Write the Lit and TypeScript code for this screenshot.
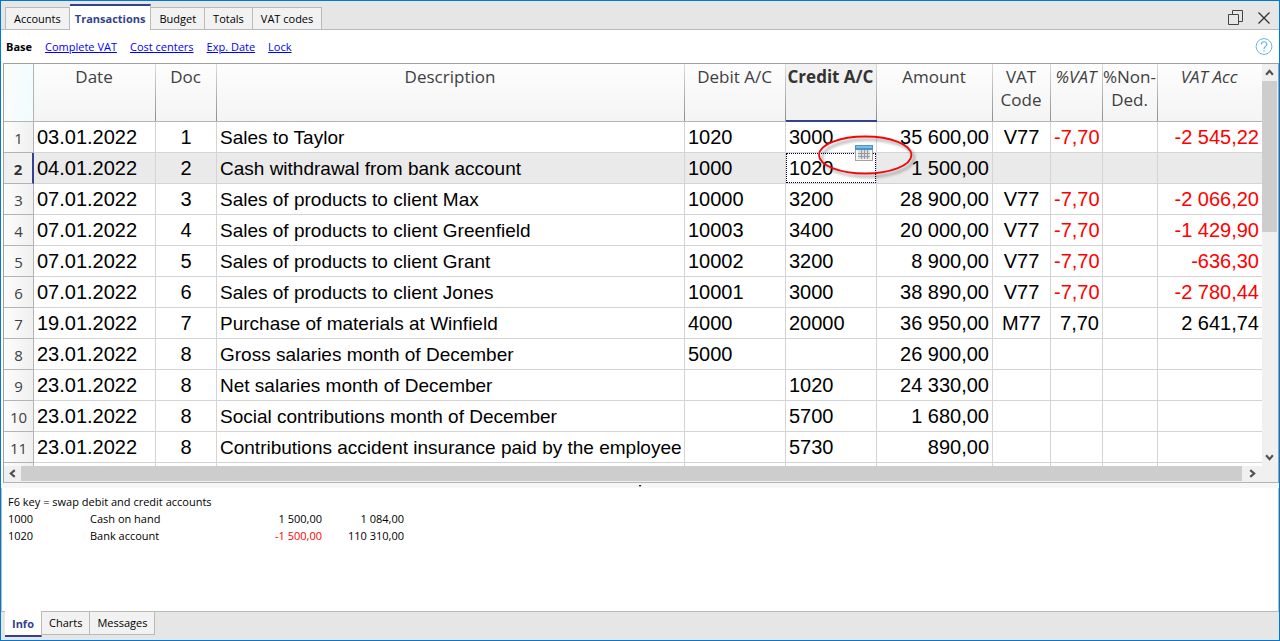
import { LitElement, html, css, svg, nothing } from "lit";
import { customElement, property, state } from "lit/decorators.js";
import { classMap } from "lit/directives/class-map.js";

type Row = [string, string, string, string, string, string, string, string, string];

const ROWS: Row[] = [
  ["03.01.2022", "1", "Sales to Taylor", "1020", "3000", "35 600,00", "V77", "-7,70", "-2 545,22"],
  ["04.01.2022", "2", "Cash withdrawal from bank account", "1000", "1020", "1 500,00", "", "", ""],
  ["07.01.2022", "3", "Sales of products to client Max", "10000", "3200", "28 900,00", "V77", "-7,70", "-2 066,20"],
  ["07.01.2022", "4", "Sales of products to client Greenfield", "10003", "3400", "20 000,00", "V77", "-7,70", "-1 429,90"],
  ["07.01.2022", "5", "Sales of products to client Grant", "10002", "3200", "8 900,00", "V77", "-7,70", "-636,30"],
  ["07.01.2022", "6", "Sales of products to client Jones", "10001", "3000", "38 890,00", "V77", "-7,70", "-2 780,44"],
  ["19.01.2022", "7", "Purchase of materials at Winfield", "4000", "20000", "36 950,00", "M77", "7,70", "2 641,74"],
  ["23.01.2022", "8", "Gross salaries month of December", "5000", "", "26 900,00", "", "", ""],
  ["23.01.2022", "8", "Net salaries month of December", "", "1020", "24 330,00", "", "", ""],
  ["23.01.2022", "8", "Social contributions month of December", "", "5700", "1 680,00", "", "", ""],
  ["23.01.2022", "8", "Contributions accident insurance paid by the employee", "", "5730", "890,00", "", "", ""],
];

const BALANCES = [
  ["1000", "Cash on hand", "1 500,00", "1 084,00"],
  ["1020", "Bank account", "-1 500,00", "110 310,00"],
];

const chevron = (d: string) => html`<svg class="chevron" viewBox="0 0 8 8" aria-hidden="true"><path d=${d} /></svg>`;

@customElement("tab-strip")
class TabStrip extends LitElement {
  @property({ attribute: false }) tabs: string[] = [];
  @property({ type: Number }) active = 0;
  @property({ type: Boolean, reflect: true }) bottom = false;

  static styles = css`
    :host { display: flex; align-items: flex-end; padding-left: 4px; }
    :host([bottom]) { align-items: flex-start; }
    button {
      box-sizing: border-box;
      height: 22px;
      margin: 0;
      padding: 0 8px;
      border: 1px solid #bababa;
      border-left-width: 0;
      border-bottom-width: 0;
      background: #f2f2f2;
      color: #000;
      font: 11px/20px "Open Sans", "Noto Sans", sans-serif;
    }
    button:first-child { border-left-width: 1px; }
    button.on {
      height: 26px;
      padding: 2px 5px 0;
      border-top: 2px solid #34418f;
      background: #fff;
      color: #34418f;
      font-weight: 700;
      margin-bottom: -1px;
    }
    :host([bottom]) button { height: 23px; padding: 0 7px; border-width: 0 1px 1px 0; }
    :host([bottom]) button.on {
      height: 26px;
      padding: 2px 7px 0;
      margin: -1px 0 0;
      border-bottom: 2px solid #34418f;
      border-top: 0;
    }
  `;

  render() {
    return this.tabs.map(
      (t, i) => html`<button
        type="button"
        class=${classMap({ on: i === this.active })}
        aria-pressed=${i === this.active}
        @click=${() => (this.active = i)}
      >${t}</button>`
    );
  }
}

@customElement("transactions-grid")
class TransactionsGrid extends LitElement {
  @state() selected = 1;

  static styles = css`
    :host {
      display: grid;
      grid-template-columns: minmax(0, 1fr) 16px;
      grid-template-rows: minmax(0, 1fr) 16px;
      border: 1px solid #a0a0a0;
      border-bottom-color: #b4b4b4;
      background: #fff;
    }
    .view { overflow: hidden; }
    table { width: 100%; table-layout: fixed; border-collapse: separate; border-spacing: 0; }
    th, td { box-sizing: border-box; padding: 0; white-space: nowrap; }
    .c-num { width: 30px; }
    .c-date { width: 122px; }
    .c-doc { width: 61px; }
    .c-debit { width: 101px; }
    .c-credit { width: 91px; }
    .c-amount { width: 116px; }
    .c-code { width: 58px; }
    .c-pct { width: 52px; }
    .c-non { width: 55px; }
    .c-acc { width: 104px; }
    thead th {
      height: 58px;
      vertical-align: top;
      font: 17px/23px "Open Sans", "Noto Sans", sans-serif;
      color: #404040;
      padding: 1px 2px 0 0;
      background:
        linear-gradient(#b4b4b4, #b4b4b4) bottom / 100% 1px no-repeat,
        linear-gradient(#dcdcdc, #8c8c8c) right / 1px 100% no-repeat,
        linear-gradient(#fdfdfd, #f4f4f4);
    }
    thead .corner {
      background:
        linear-gradient(#b4b4b4, #b4b4b4) bottom / 100% 1px no-repeat,
        linear-gradient(#b4b4b4, #b4b4b4) right / 1px 100% no-repeat,
        linear-gradient(100deg, #fcfcfc, #effcff);
    }
    thead .current {
      font-weight: 700;
      color: #333;
      background:
        linear-gradient(#34418f, #34418f) bottom / 100% 2px no-repeat,
        linear-gradient(#dcdcdc, #8c8c8c) right / 1px 100% no-repeat,
        #f2f2f2;
    }
    thead .calc { font-style: italic; }
    thead .last {
      background:
        linear-gradient(#b4b4b4, #b4b4b4) bottom / 100% 1px no-repeat,
        linear-gradient(#fdfdfd, #f4f4f4);
    }
    td {
      height: 31px;
      border-right: 1px solid #d4d4d4;
      border-bottom: 1px solid #d4d4d4;
      padding: 0 3px;
      font: 20px/30px "Liberation Sans", Arial, sans-serif;
      color: #000;
    }
    td.text { font-size: 19px; line-height: 29px; padding-top: 1px; }
    td:last-child { border-right: 0; }
    tbody th {
      height: 31px;
      padding-top: 2px;
      font: 15px/28px "Open Sans", "Noto Sans", sans-serif;
      color: #404040;
      border-right: 1px solid #b4b4b4;
      border-bottom: 1px solid #b4b4b4;
      background: linear-gradient(90deg, #fdfdfd, #f0f0f0);
    }
    .mid { text-align: center; }
    .num { text-align: right; }
    .neg { color: #f00; }
    .sel td { background: #eaeaea; }
    .sel th { font-weight: 700; color: #333; border-right: 2px solid #34418f; background: #f0f0f0; }
    .sel .cell { position: relative; background: #fff; }
    .sel .cell::after {
      content: "";
      position: absolute;
      inset: 0;
      border: 1px dotted #000040;
      pointer-events: none;
    }
    .pick {
      position: absolute;
      left: 69px;
      top: -8px;
      width: 18px;
      height: 16px;
      padding: 0;
      border: 0;
      background: none;
      z-index: 1;
    }
    .pick svg { display: block; }
    .ring {
      position: absolute;
      left: 26px;
      top: -23px;
      width: 110px;
      height: 56px;
      pointer-events: none;
      z-index: 2;
    }
    .bar { display: flex; background: #f0f0f0; }
    .bar.v { flex-direction: column; }
    .bar.h { grid-column: 1; }
    .bar button {
      flex: none;
      display: grid;
      place-items: center;
      width: 17px;
      height: 17px;
      padding: 0;
      border: 0;
      background: none;
    }
    .bar.h button { height: 15px; }
    .bar.h button:last-child { width: 20px; }
    .bar.v button { width: 15px; }
    .track { flex: 1; display: flex; }
    .v .track { flex-direction: column; }
    .thumb { background: #cdcdcd; }
    .h .thumb { flex: 1; height: 15px; }
    .v .thumb { height: 41%; width: 15px; }
    .corner-box { background: #f0f0f0; }
    .chevron { width: 9px; height: 9px; fill: none; stroke: #505050; stroke-width: 1.9; }
  `;

  ring() {
    return html`<svg class="ring" viewBox="0 0 110 56" aria-hidden="true">
      <defs><filter id="soft" x="-20%" y="-30%" width="150%" height="170%"><feGaussianBlur stdDeviation="1.5" /></filter></defs>
      <ellipse cx="56" cy="28" rx="46" ry="18.5" fill="none" stroke="#000" stroke-opacity=".38" stroke-width="1.8" filter="url(#soft)" />
      <ellipse cx="53.2" cy="25" rx="46.2" ry="18.5" fill="none" stroke="#f00808" stroke-width="1.8" />
    </svg>`;
  }

  calendar() {
    return html`<svg width="18" height="16" viewBox="0 0 18 16" aria-hidden="true">
      <rect x=".5" y=".5" width="17" height="15" fill="#f4f4f4" stroke="#a2a2a2" />
      <rect width="18" height="5" fill="#4a96c8" />
      <rect x="1" y="1" width="16" height="2" fill="#82bde2" />
      <rect x="3" y="5" width="12" height="9" fill="#dedede" />
      <path d="M3 8.5H15M3 11.5H15M6.5 5V14M9.5 5V14M12.5 5V14" fill="none" stroke="#999" />
    </svg>`;
  }

  row(r: Row, i: number) {
    const neg = (v: string) => (v.startsWith("-") ? "num neg" : "num");
    const sel = i === this.selected;
    return html`<tr class=${classMap({ sel })} @click=${() => (this.selected = i)}>
      <th scope="row">${i + 1}</th>
      <td>${r[0]}</td>
      <td class="mid">${r[1]}</td>
      <td class="text">${r[2]}</td>
      <td>${r[3]}</td>
      <td class="cell">${r[4]}${sel
        ? html`<button class="pick" type="button" aria-label="Select account">${this.calendar()}</button>${this.ring()}`
        : nothing}</td>
      <td class="num">${r[5]}</td>
      <td class="mid">${r[6]}</td>
      <td class=${neg(r[7])}>${r[7]}</td>
      <td></td>
      <td class=${neg(r[8])}>${r[8]}</td>
    </tr>`;
  }

  render() {
    return html`
      <div class="view">
        <table>
          <colgroup>
            <col class="c-num" /><col class="c-date" /><col class="c-doc" /><col /><col class="c-debit" /><col class="c-credit" />
            <col class="c-amount" /><col class="c-code" /><col class="c-pct" /><col class="c-non" /><col class="c-acc" />
          </colgroup>
          <thead>
            <tr>
              <th class="corner"></th>
              <th>Date</th>
              <th>Doc</th>
              <th>Description</th>
              <th>Debit A/C</th>
              <th class="current">Credit A/C</th>
              <th>Amount</th>
              <th>VAT<br />Code</th>
              <th class="calc">%VAT</th>
              <th>%Non-<br />Ded.</th>
              <th class="calc last">VAT Acc</th>
            </tr>
          </thead>
          <tbody>
            ${ROWS.map((r, i) => this.row(r, i))}
            <tr><th></th>${Array.from({ length: 10 }, () => html`<td></td>`)}</tr>
          </tbody>
        </table>
      </div>
      <div class="bar v">
        <button type="button" aria-label="Scroll up">${chevron("M1 6L4 2.5L7 6")}</button>
        <div class="track"><div class="thumb"></div></div>
        <button type="button" aria-label="Scroll down">${chevron("M1 2L4 5.5L7 2")}</button>
      </div>
      <div class="bar h">
        <button type="button" aria-label="Scroll left">${chevron("M6 1L2.5 4L6 7")}</button>
        <div class="track"><div class="thumb"></div></div>
        <button type="button" aria-label="Scroll right">${chevron("M2 1L5.5 4L2 7")}</button>
      </div>
      <div class="corner-box"></div>
    `;
  }
}

@customElement("app-root")
class AppRoot extends LitElement {
  static styles = css`
    :host {
      box-sizing: border-box;
      display: flex;
      flex-direction: column;
      height: 100vh;
      border: 1px solid #0078d7;
      background: #fff;
      color: #000;
      font: 11px/17px "Open Sans", "Noto Sans", sans-serif;
    }
    header {
      display: flex;
      justify-content: space-between;
      height: 28px;
      background: #e6e6e6;
      border-bottom: 1px solid #bababa;
      flex: none;
    }
    .window { display: flex; align-items: center; gap: 13px; padding: 6px 8px 0 0; }
    .window button, .help { display: grid; padding: 0; border: 0; background: none; }
    nav { display: flex; align-items: center; gap: 13px; height: 33px; padding: 0 6px 0 5px; flex: none; }
    nav a { color: #00f; text-decoration: underline; }
    .help { margin-left: auto; }
    transactions-grid { flex: 1; min-height: 0; margin: 0 0 0 2px; }
    .split { height: 5px; flex: none; background: #f7f7f7; display: grid; justify-content: center; }
    .split::before { content: ""; width: 3px; height: 2px; margin-top: 2px; background: #222; clip-path: polygon(0 0, 100% 0, 50% 100%); }
    .info {
      flex: none;
      box-sizing: border-box;
      min-height: 124px;
      padding: 5px 6px;
      border: 1px solid #bababa;
      border-width: 0 1px 1px;
    }
    .info p { margin: 0; }
    .info table { border-spacing: 0; }
    .info td { padding: 0; width: 82px; }
    .info .name { width: 150px; }
    .info .num { text-align: right; }
    .info .neg { color: #f00; }
    footer { flex: none; height: 28px; background: #e6e6e6; }
  `;

  render() {
    return html`
      <header>
        <tab-strip .tabs=${["Accounts", "Transactions", "Budget", "Totals", "VAT codes"]} .active=${1}></tab-strip>
        <div class="window">
          <button type="button" aria-label="Restore window">
            <svg width="16" height="16" viewBox="0 0 16 16" fill="none" stroke="#444"><path d="M.5 4.5H10.5V14.5H.5ZM4.5 4V.5H14.5V11.5H11" /></svg>
          </button>
          <button type="button" aria-label="Close">
            <svg width="14" height="14" viewBox="0 0 14 14" fill="none" stroke="#333" stroke-width="1.3"><path d="M1.5 1.5L12.5 12.5M12.5 1.5L1.5 12.5" /></svg>
          </button>
        </div>
      </header>
      <nav>
        <b>Base</b>
        <a href="#vat">Complete VAT</a>
        <a href="#cost">Cost centers</a>
        <a href="#exp">Exp. Date</a>
        <a href="#lock">Lock</a>
        <button class="help" type="button" aria-label="Help">
          <svg width="18" height="18" viewBox="0 0 18 18" fill="none" stroke="#6cb4e4"><circle cx="9" cy="8.5" r="7.9" /><path d="M6.3 6.4C6.3 2.9 11.8 2.9 11.8 6.2C11.8 8.5 9 8.4 9 11M9 12.3V13.7" stroke-width="1.2" /></svg>
        </button>
      </nav>
      <transactions-grid></transactions-grid>
      <div class="split"></div>
      <section class="info">
        <p>F6 key = swap debit and credit accounts</p>
        <table>
          ${BALANCES.map(
            ([id, name, a, b]) => html`<tr>
              <td>${id}</td>
              <td class="name">${name}</td>
              <td class=${a.startsWith("-") ? "num neg" : "num"}>${a}</td>
              <td class="num">${b}</td>
            </tr>`
          )}
        </table>
      </section>
      <footer><tab-strip bottom .tabs=${["Info", "Charts", "Messages"]} .active=${0}></tab-strip></footer>
    `;
  }
}
